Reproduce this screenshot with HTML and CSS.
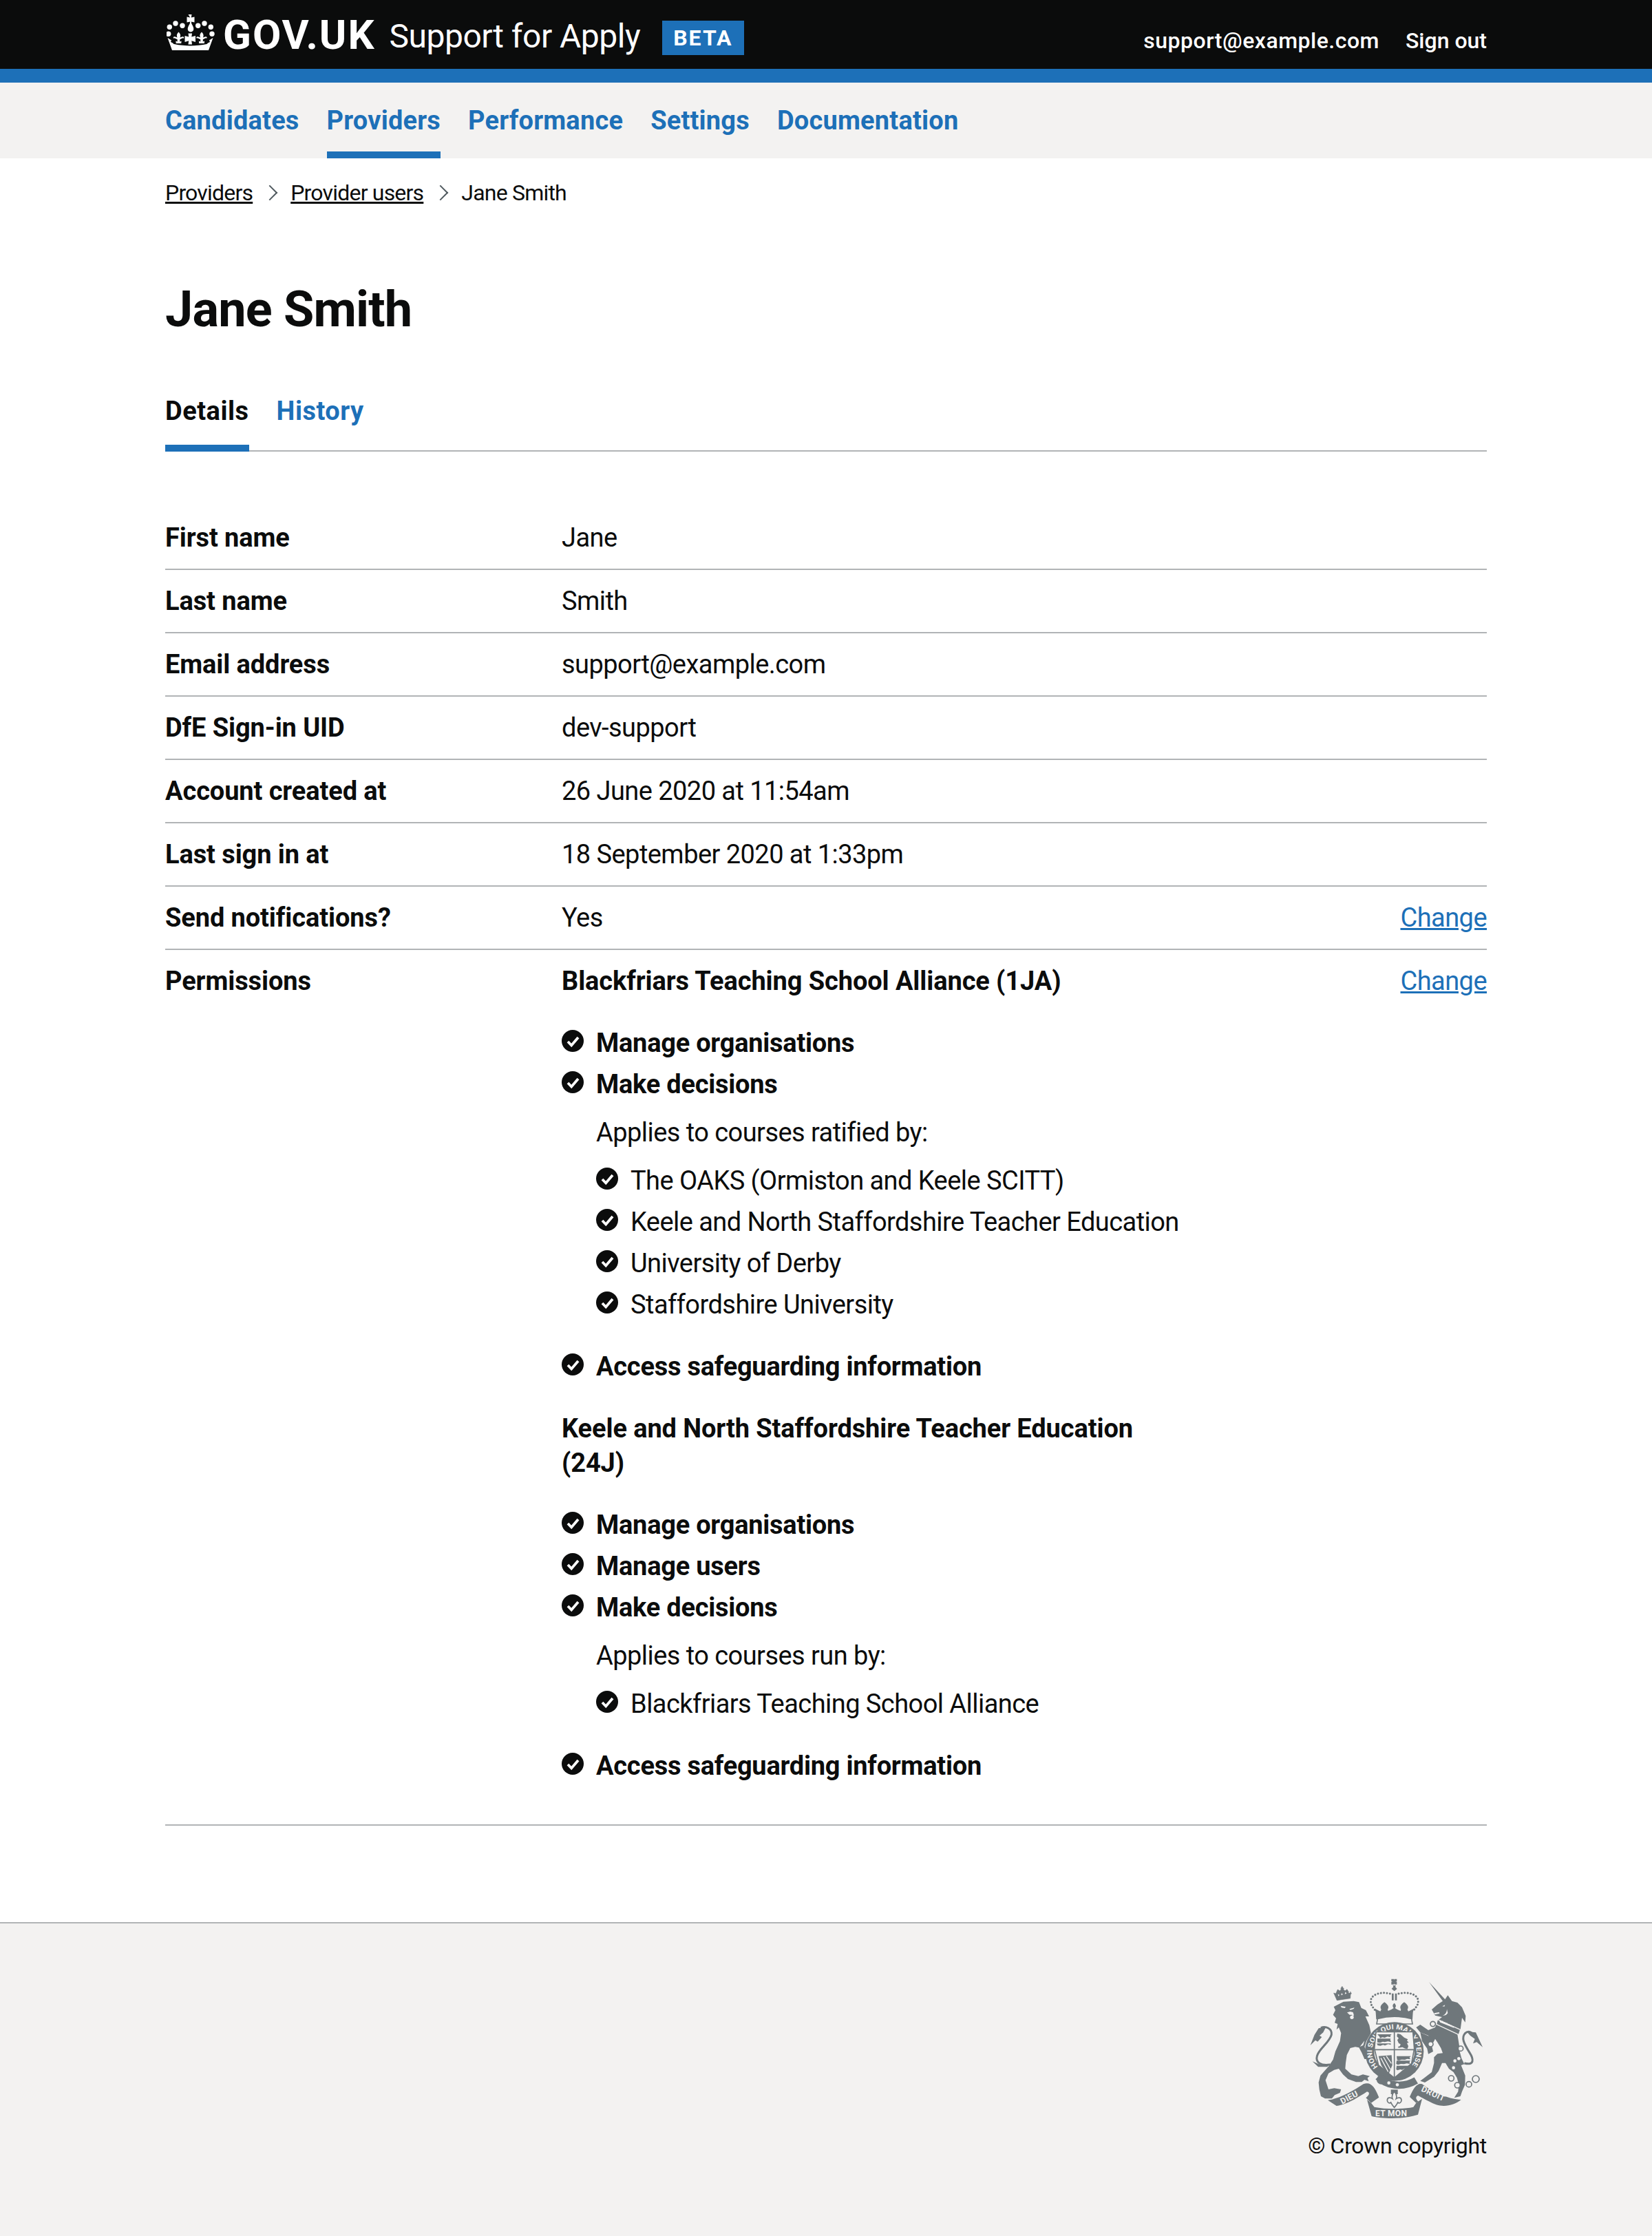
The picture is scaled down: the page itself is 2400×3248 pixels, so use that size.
FILE: index.html
```html
<!DOCTYPE html>
<html lang="en">
<head>
<meta charset="utf-8">
<title>Jane Smith - Support for Apply</title>
<link rel="stylesheet" href="styles.css">
</head>
<body>
<svg class="defs" width="0" height="0" aria-hidden="true">
  <symbol id="tick" viewBox="0 0 32 32">
    <circle cx="16" cy="16" r="16"/>
    <path d="M9 17l5.200 5.500L24 11" fill="none" stroke="#fff" stroke-width="3.800"/>
  </symbol>
</svg>
<header class="header">
  <div class="container header-inner">
    <div class="brand">
      <svg class="crown" viewBox="0 0 70 52" aria-hidden="true"><g fill="#fff">
        <circle cx="4.300" cy="18.300" r="3.700"/><circle cx="13" cy="13" r="3.700"/><circle cx="23" cy="16.300" r="3.700"/>
        <circle cx="45.700" cy="16.300" r="3.700"/><circle cx="55" cy="13" r="3.700"/><circle cx="64.300" cy="18.300" r="3.700"/>
        <circle cx="2.700" cy="28.300" r="3.700"/><circle cx="66" cy="28.300" r="3.700"/>
        <path d="M31.500 0h5l-.7 4.500 4.700-1v8l-4.700-1 .5 3c2 3 3 5.500 3 7.500 0 2.500-1.500 4-4.300 4.500-2.800-.5-4.300-2-4.300-4.500 0-2 1-4.500 3-7.500l.5-3-4.700 1v-8l4.700 1z"/>
        <path d="M31.500 27.500h5.500l-.7 5 5.700-1.500v9l-5.700-1.800.7 5.300h-5.500l.7-5.300-5.700 1.800v-9l5.700 1.500z"/>
        <path d="M17.500 25.500c2 2 3 4 2.500 6.500l-.7 1.500 3.700-1.200c1.800-.4 2.800 1 1.800 2.500l-1.300-.5-4.200 2v3.200l2.300-1-.3 3.500h-7.600l-.3-3.500 2.300 1v-3.200l-4.200-2-1.300.5c-1-1.500 0-2.900 1.800-2.500l3.700 1.200-.7-1.500c-.5-2.500.5-4.500 2.500-6.500z"/>
        <path d="M51 25.500c2 2 3 4 2.500 6.500l-.7 1.500 3.700-1.200c1.800-.4 2.800 1 1.800 2.500l-1.300-.5-4.200 2v3.200l2.300-1-.3 3.500h-7.600l-.3-3.500 2.300 1v-3.200l-4.200-2-1.300.5c-1-1.500 0-2.900 1.800-2.500l3.700 1.200-.7-1.500c-.5-2.500.5-4.500 2.500-6.500z"/>
        <path d="M1.500 34l5.500 3.500-1 2.500 3 1.500 1.500 1.500c7 1.500 16 2.500 24 2.500s17-1 24-2.500l1.500-1.500 3-1.500-1-2.500 5.500-3.500-6.500 18H8z"/>
      </g></svg>
      <span class="logotype">GOV.UK</span>
      <span class="service">Support for Apply</span>
      <strong class="tag">BETA</strong>
    </div>
    <div class="account">
      <span>support@example.com</span>
      <a href="#">Sign out</a>
    </div>
  </div>
</header>
<nav class="nav">
  <ul class="container nav-list">
    <li><a href="#">Candidates</a></li>
    <li class="is-current"><a href="#">Providers</a></li>
    <li><a href="#">Performance</a></li>
    <li><a href="#">Settings</a></li>
    <li><a href="#">Documentation</a></li>
  </ul>
</nav>
<div class="container">
  <ol class="breadcrumbs">
    <li><a href="#">Providers</a></li>
    <li class="chev"><a href="#">Provider users</a></li>
    <li class="chev">Jane Smith</li>
  </ol>
  <main class="main">
    <h1 class="title">Jane Smith</h1>
    <ul class="tabs">
      <li class="tab is-current"><a href="#">Details</a></li>
      <li class="tab"><a href="#">History</a></li>
    </ul>
    <dl class="summary">
      <div class="row"><dt>First name</dt><dd>Jane</dd></div>
      <div class="row"><dt>Last name</dt><dd>Smith</dd></div>
      <div class="row"><dt>Email address</dt><dd>support@example.com</dd></div>
      <div class="row"><dt>DfE Sign-in UID</dt><dd>dev-support</dd></div>
      <div class="row"><dt>Account created at</dt><dd>26 June 2020 at 11:54am</dd></div>
      <div class="row"><dt>Last sign in at</dt><dd>18 September 2020 at 1:33pm</dd></div>
      <div class="row"><dt>Send notifications?</dt><dd>Yes</dd><a class="action" href="#">Change</a></div>
      <div class="row">
        <dt>Permissions</dt>
        <dd>
          <h2 class="org">Blackfriars Teaching School Alliance (1JA)</h2>
          <ul class="perms">
            <li class="perm"><svg class="tick"><use href="#tick"/></svg>Manage organisations</li>
            <li class="perm"><svg class="tick"><use href="#tick"/></svg>Make decisions
              <p class="applies">Applies to courses ratified by:</p>
              <ul class="subperms">
                <li class="sub"><svg class="tick"><use href="#tick"/></svg>The OAKS (Ormiston and Keele SCITT)</li>
                <li class="sub"><svg class="tick"><use href="#tick"/></svg>Keele and North Staffordshire Teacher Education</li>
                <li class="sub"><svg class="tick"><use href="#tick"/></svg>University of Derby</li>
                <li class="sub"><svg class="tick"><use href="#tick"/></svg>Staffordshire University</li>
              </ul>
            </li>
            <li class="perm"><svg class="tick"><use href="#tick"/></svg>Access safeguarding information</li>
          </ul>
          <h2 class="org">Keele and North Staffordshire Teacher Education (24J)</h2>
          <ul class="perms">
            <li class="perm"><svg class="tick"><use href="#tick"/></svg>Manage organisations</li>
            <li class="perm"><svg class="tick"><use href="#tick"/></svg>Manage users</li>
            <li class="perm"><svg class="tick"><use href="#tick"/></svg>Make decisions
              <p class="applies">Applies to courses run by:</p>
              <ul class="subperms">
                <li class="sub"><svg class="tick"><use href="#tick"/></svg>Blackfriars Teaching School Alliance</li>
              </ul>
            </li>
            <li class="perm"><svg class="tick"><use href="#tick"/></svg>Access safeguarding information</li>
          </ul>
        </dd>
        <a class="action" href="#">Change</a>
      </div>
    </dl>
  </main>
</div>
<footer class="footer">
  <div class="container footer-inner">
    <svg class="crest" viewBox="120 330 780 630" aria-hidden="true">
      <defs>
        <path id="garter" d="M426 726A97 97 0 1 1 568 726"/>
      </defs>
      <g class="cd">
        <g transform="translate(105 315)">
          <path class="clc" d="M142 122l-14-32 9 3 8-18 10 6 6-9-3-3 4-2 1-5 4 1 0 5 5 2-2 4 7 7 9-7 7 12 8-1 4 8-4 3-1 17z"/>
          <path class="cg" d="M148 104l-2-9 7 4zM160 100l2-10 6 7zM176 95l3-10 5 7zM192 90l5-8 3 7z"/>
          <path d="M128 150L170 128L215 125L238 130L248 155L268 165L282 192L266 192L283 230L290 265L270 300L262 325L270 342L290 352L302 385L280 378L262 378L250 350L238 328L222 325L200 330L185 360L180 395L178 420L205 445L235 452L255 445L285 452L275 460L280 475L262 468L250 478L225 478L190 465L168 445L150 420L130 425L105 440L92 470L105 510L130 505L160 510L155 525L132 535L120 550L90 550L72 540L65 510L62 480L70 450L105 410L125 380L135 345L155 300L160 265L150 240L140 250L145 225L132 220L138 200L125 185L135 165Z"/>
          <path class="cg" d="M158 146l22 4-4 6-14-2zM196 160l22-6-3 5-14 5zM186 175l14-4 12 3 3 10 0 6-5 1-3-6-10 0z"/>
          <circle class="cg" cx="207" cy="196" r="8"/>
          <path class="cg" d="M262 298l-20 26 14-6z"/>
          <path class="ctail" d="M112 402C70 408 48 392 55 365 62 335 110 305 118 272 122 245 92 232 72 242"/>
          <path d="M95 236L62 244L44 272L26 318L48 296L58 302L76 282L66 276L82 262Z"/>
          <path d="M112 398L75 405L35 388L60 412L100 412Z"/>
        </g>
        <path d="M484 344h11l1 5 1-5h11v11l-6 1 6 1v11h-11l-1-5-1 5h-11v-11l6-1-6-1zM490 372h14l-3 6 8 9-12 10-12-10 8-9zM486 407h8v30h-8zM500 407h8v30h-8z"/>
        <path class="cdots" d="M478 408C440 398 396 410 394 440 394 462 408 470 418 488"/>
        <path class="cdots" d="M516 408C554 398 600 410 601 440 601 462 587 470 576 488"/>
        <path d="M416 490l-4-17 24 12 4-8c-8-12 0-22 14-32 14 10 22 20 14 32l2 6 14-6 10-6c-6-8-6-14 3-22 8 8 9 14 3 22l10 6 14 6 2-6c-8-12 0-22 14-32 14 10 22 20 14 32l4 8 24-12-4 17-2 30H418z"/>
        <path class="cl" d="M424 517C470 505 525 505 572 517L576 540 420 540z"/>
        <circle cx="497" cy="660" r="128"/>
        <circle class="cg" cx="497" cy="660" r="88"/>
        <text class="crest-garter" textLength="440"><textPath href="#garter" startOffset="0" textLength="440" lengthAdjust="spacingAndGlyphs">HONI SOIT QUI MAL Y PENSE</textPath></text>
        <path class="cshield" d="M417 574H578L584 648 572 712 497 775 428 720 410 648ZM497 570V775M410 652H584"/>
        <g class="cm">
          <path d="M423 585h62l-6 7 2 6-14-3-12 5-10-2-10 4-3-7zM423 604h58l-2 5 4 10-14-3-14 3-8-2-12 5-12-2zM421 625h60l1 6-12-3-14 6-8-3-12 4-12-2z"/>
          <path d="M510 582l14 3 16 14 16 8-4 6 8 8-8 2 6 14-4 12-10-2-12-6-16 3-4-4 10-4 2-8-8-4-6-14 6-8-8-8z"/>
          <path d="M507 680h62l-6 6 4 8-14-2-10 4-14-1-12 4-8-2zM507 700h60l-4 6 2 8-14-2-12 3-14-1-12 4-8-4zM507 722h54l-6 8-2 6-12-2-10 6-8-2-12 4-6-4z"/>
          <path d="M428 680L485 676 488 720 472 758 456 745 440 720Z"/>
        </g>
        <path class="cstripe" d="M438 688L470 748M450 684L480 738M462 680L484 712"/>
        <path class="cbelt" d="M427 770C460 808 530 822 592 786"/>
        <circle cx="440" cy="783" r="20"/>
        <circle class="cg" cx="473" cy="797" r="7"/>
        <circle class="cg" cx="510" cy="805" r="7"/>
        <path d="M482 826h30v20h-30z"/>
        <path class="cg cfleur" d="M497 834c10 12 12 22 8 32 8-6 22-8 23 6 0 10-9 16-16 10-3 8-10 16-15 22-5-6-12-14-15-22-7 6-16 0-16-10 1-14 15-12 23-6-4-10-2-20 8-32z"/>
        <path d="M207 872C260 866 320 830 362 802 395 790 412 815 430 860L396 884 373 862C388 850 392 838 378 835 340 860 288 892 245 897Z"/>
        <path d="M378 870L396 884 410 902C460 912 535 912 580 902L592 884 618 866 600 935C540 955 450 955 398 942Z"/>
        <path d="M564 858C580 820 596 795 618 802 660 835 730 868 788 870 760 892 720 904 680 892 650 880 625 865 600 852 588 858 590 868 602 878L618 866 592 884Z"/>
        <g transform="translate(480 315)">
          <path d="M168 42L238 118L250 100L268 125L292 132L312 152L328 190L326 218L312 198L305 250L292 270L300 320L302 345L310 375L322 400L308 405L326 450L325 490L312 520L305 540L278 547L295 520L298 490L290 460L275 435L255 420L240 395L225 395L210 430L190 455L150 480L130 473L150 458L180 435L190 395L190 370L205 355L228 352L220 330L205 305L195 290L175 300L165 275L130 262L112 240L130 228L165 252L195 240L205 210L225 195L195 188L180 162L205 140L228 125Z"/>
          <path d="M130 262L195 290L180 318L186 345L165 356L160 332L138 300Z"/>
          <path class="cg" d="M190 178l22-4 2 5-20 5zM226 148l12-6-3 7zM246 160c0 14-6 24-20 30l16-4 8-8z"/>
          <path class="cstroke" d="M205 205L305 250 298 272 200 226Z"/>
          <path class="cg" d="M214 214l4-6 6 6 4-3 4 7 6-2 2 6 7-2 3 7 7-2 2 7 7-2 2 7 7-1 2 6-60-24z"/>
          <path class="ctail" d="M322 396C368 408 362 376 345 350 320 310 308 285 325 266 340 252 358 260 368 284"/>
          <path d="M332 258L372 262L402 326L376 304L360 310L368 290L348 276Z"/>
          <circle class="cg" cx="298" cy="376" r="7"/><circle class="cg" cx="281" cy="386" r="7"/><circle class="cg" cx="275" cy="416" r="7"/>
          <g class="crings">
            <circle cx="185" cy="225" r="11"/><circle cx="175" cy="313" r="11"/><circle cx="306" cy="332" r="11"/>
            <circle cx="265" cy="462" r="12"/><circle cx="292" cy="492" r="12"/><circle cx="342" cy="488" r="12"/><circle cx="372" cy="465" r="15"/>
          </g>
        </g>
      </g>
      <g class="crest-motto">
        <text transform="translate(270 890) rotate(-28)">DIEU</text>
        <text x="414" y="943">ET MON</text>
        <text transform="translate(612 832) rotate(25)">DROIT</text>
      </g>
    </svg>
    <p class="copyright">© Crown copyright</p>
  </div>
</footer>
</body>
</html>
```
FILE: styles.css
```css
* { box-sizing: border-box; }
html, body { margin: 0; padding: 0; }
body { font-family: Roboto, Arial, sans-serif; font-size: 38px; line-height: 50px; letter-spacing: -0.55px; color: #0b0c0c; background: #fff; }
ul, ol, dl, dd, h1, h2, p { margin: 0; padding: 0; list-style: none; }
a { color: inherit; }
.defs { position: absolute; }
.container { width: 1920px; margin: 0 auto; }

.header { background: #0b0c0c; height: 120px; border-bottom: 20px solid #1d70b8; color: #fff; }
.header-inner { display: flex; justify-content: space-between; height: 100px; }
.brand { display: flex; align-items: flex-start; padding-left: 2px; }
.crown { width: 70px; height: 52px; margin-top: 21px; margin-right: 12px; flex: none; }
.logotype { font-weight: 700; font-size: 60px; line-height: 60px; letter-spacing: 2px; margin-top: 21px; margin-right: 20px; }
.service { font-size: 48px; line-height: 60px; letter-spacing: -0.5px; margin-top: 23px; margin-right: 32px; }
.tag { background: #1d70b8; color: #fff; font-size: 32px; line-height: 50px; margin-top: 30px; padding: 0 16px; letter-spacing: 2px; }
.account { display: flex; gap: 38px; font-size: 32px; font-weight: 500; letter-spacing: 0.5px; padding-top: 34px; }
.account a { text-decoration: none; letter-spacing: 0; }

.nav { background: #f3f2f1; height: 110px; }
.nav-list { display: flex; gap: 40px; height: 110px; letter-spacing: 0.2px; }
.nav-list li { height: 110px; padding-top: 30px; }
.nav-list a { color: #1d70b8; font-weight: 700; text-decoration: none; }
.nav-list .is-current { border-bottom: 10px solid #1d70b8; }

.breadcrumbs { display: flex; font-size: 32px; line-height: 40px; letter-spacing: -0.8px; padding-top: 30px; }
.breadcrumbs .chev { display: flex; align-items: center; }
.breadcrumbs .chev::before { content: ""; width: 14px; height: 14px; border: solid #505a5f; border-width: 2px 2px 0 0; transform: rotate(45deg); margin: 0 22px 0 17px; }

.main { padding-top: 100px; padding-bottom: 140px; }
.title { font-size: 72px; line-height: 100px; font-weight: 700; letter-spacing: -0.8px; margin-bottom: 50px; }
.tabs { display: flex; gap: 40px; border-bottom: 2px solid #b1b4b6; height: 106px; letter-spacing: 0.5px; }
.tab { height: 106px; padding-top: 22px; font-weight: 700; color: #1d70b8; }
.tab a { text-decoration: none; }
.tab.is-current { color: #0b0c0c; border-bottom: 10px solid #1d70b8; }

.summary { margin-top: 80px; }
.row { display: flex; border-bottom: 2px solid #b1b4b6; padding: 20px 0; }
dt { width: 576px; font-weight: 700; letter-spacing: -0.1px; flex: none; }
dd { width: 920px; flex: none; }
.action { margin-left: auto; color: #1d70b8; }

.org { font-size: 38px; line-height: 50px; font-weight: 700; letter-spacing: -0.1px; margin-bottom: 40px; }
.perms { margin-bottom: 40px; font-weight: 700; letter-spacing: -0.25px; }
.perm { margin-bottom: 10px; padding-left: 50px; position: relative; }
.perm:last-child { margin-bottom: 0; }
.tick { width: 32px; height: 32px; position: absolute; left: 0; top: 6px; fill: #0b0c0c; }
.applies { font-weight: 400; letter-spacing: -0.55px; margin-top: 20px; }
.subperms { font-weight: 400; letter-spacing: -0.55px; margin-top: 20px; margin-bottom: 40px; }
.sub { margin-bottom: 10px; padding-left: 50px; position: relative; }
.sub:last-child { margin-bottom: 0; }

.footer { background: #f3f2f1; border-top: 2px solid #b1b4b6; height: 456px; }
.footer-inner { display: flex; flex-direction: column; align-items: flex-end; padding-top: 76px; }
.crest { width: 260px; height: 210px; }
.copyright { font-size: 32px; line-height: 40px; letter-spacing: -0.3px; margin-top: 17px; }
.cd { fill: #6f777b; }
.cg { fill: #f3f2f1; }
.cl { fill: #f3f2f1; stroke: #6f777b; stroke-width: 5; }
.clc { fill: #6f777b; stroke: #6f777b; stroke-width: 2; }
.cdots { fill: none; stroke: #6f777b; stroke-width: 9; stroke-linecap: round; stroke-dasharray: 0.1 13; }
.ctail { fill: none; stroke: #6f777b; stroke-width: 9; }
.cshield { fill: #f3f2f1; stroke: #6f777b; stroke-width: 5; }
.cm { fill: #6f777b; }
.cstripe { fill: none; stroke: #f3f2f1; stroke-width: 4; }
.cbelt { fill: none; stroke: #6f777b; stroke-width: 32; }
.cfleur { stroke: #6f777b; stroke-width: 5; }
.cstroke { fill: #6f777b; stroke: #f3f2f1; stroke-width: 4; }
.crings { fill: #f3f2f1; stroke: #6f777b; stroke-width: 5; }
.crest-garter { font-family: Roboto, sans-serif; font-weight: 700; font-size: 30px; fill: #f3f2f1; letter-spacing: 0; }
.crest-motto { font-family: Roboto, sans-serif; font-weight: 700; font-size: 36px; fill: #f3f2f1; letter-spacing: 1px; }
```
